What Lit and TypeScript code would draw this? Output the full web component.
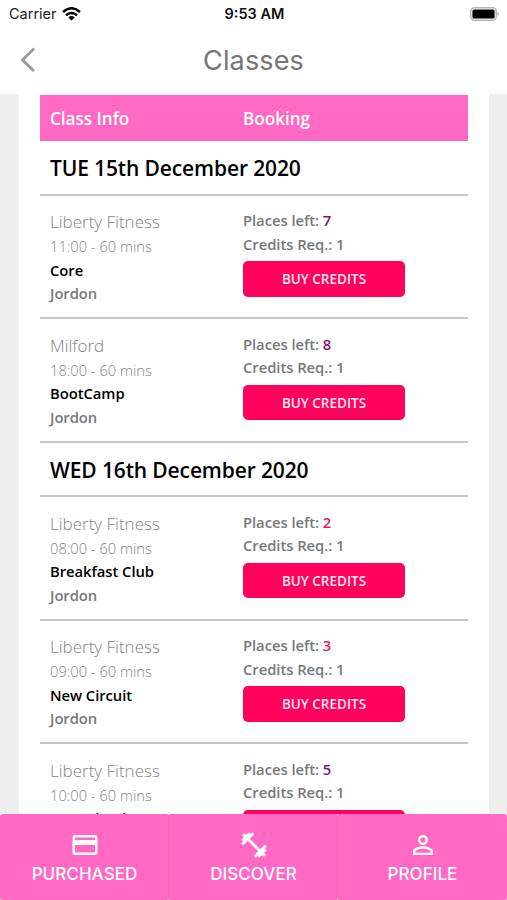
import { LitElement, html, css, svg } from "lit";
import { customElement } from "lit/decorators.js";

interface Slot { place: string; time: string; name: string; left: number; tone: string; }
interface Day { title: string; slots: Slot[]; }

const days: Day[] = [
  { title: "TUE 15th December 2020", slots: [
    { place: "Liberty Fitness", time: "11:00 - 60 mins", name: "Core", left: 7, tone: "plenty" },
    { place: "Milford", time: "18:00 - 60 mins", name: "BootCamp", left: 8, tone: "plenty" },
  ] },
  { title: "WED 16th December 2020", slots: [
    { place: "Liberty Fitness", time: "08:00 - 60 mins", name: "Breakfast Club", left: 2, tone: "few" },
    { place: "Liberty Fitness", time: "09:00 - 60 mins", name: "New Circuit", left: 3, tone: "few" },
    { place: "Liberty Fitness", time: "10:00 - 60 mins", name: "New Circuit", left: 5, tone: "plenty" },
  ] },
];

const card = svg`<path d="M20 4H4c-1.11 0-1.99.89-1.99 2L2 18c0 1.11.89 2 2 2h16c1.11 0 2-.89 2-2V6c0-1.11-.89-2-2-2zm0 14H4v-6h16v6zm0-10H4V6h16v2z"/>`;
const weights = svg`<path stroke="#fff" stroke-width=".4" d="M20.57 14.86L22 13.43 20.57 12 17 15.57 8.43 7 12 3.43 10.57 2 9.14 3.43 7.71 2 5.57 4.14 4.14 2.71 2.71 4.14l1.43 1.43L2 7.71l1.43 1.43L2 10.57 3.43 12 7 8.43 15.57 17 12 20.57 13.43 22l1.43-1.43L16.29 22l2.14-2.14 1.43 1.43 1.43-1.43-1.43-1.43L22 16.29z"/>`;
const person = svg`<path d="M12 5.9c1.16 0 2.1.94 2.1 2.1s-.94 2.1-2.1 2.1S9.9 9.16 9.9 8s.94-2.1 2.1-2.1m0 9c2.97 0 6.1 1.46 6.1 2.1v1.1H5.9V17c0-.64 3.13-2.1 6.1-2.1M12 4C9.79 4 8 5.79 8 8s1.79 4 4 4 4-1.79 4-4-1.79-4-4-4zm0 9c-2.67 0-8 1.34-8 4v3h16v-3c0-2.66-5.33-4-8-4z"/>`;

@customElement("app-root")
export class AppRoot extends LitElement {
  static styles = css`
    :host { display: flex; flex-direction: column; width: 507px; height: 900px; overflow: hidden; background: #fff; font-family: "Open Sans", sans-serif; }
    .status { display: grid; grid-template-columns: 1fr auto 1fr; align-items: center; height: 28px; padding: 0 7px 0 9px; box-sizing: border-box; font: 14.5px/28px Inter, sans-serif; color: #222; flex: none; }
    .carrier { display: flex; align-items: center; gap: 5px; }
    .clock { font-weight: 600; color: #111; }
    .battery { justify-self: end; display: block; }
    .top { position: relative; height: 66px; flex: none; display: flex; align-items: center; justify-content: center; }
    .back { position: absolute; left: 19px; top: 18px; }
    .heading { margin: 0; font: 400 27px/64px Inter, sans-serif; letter-spacing: .15px; color: #757575; }
    .body { flex: 1; min-height: 0; overflow: hidden; background: #eee; padding: 0 18px 0 19px; }
    .sheet { background: #fff; padding: 1px 21px 0; min-height: 100%; }
    .row { display: grid; grid-template-columns: 193px 1fr; padding: 0 10px; }
    .head { height: 46.4px; line-height: 47px; background: #ff69c3; color: #fff; font-size: 17.1px; font-weight: 600; }
    .date { margin: 0; height: 54.5px; box-sizing: border-box; border-bottom: 2px solid #c6c6c6; padding-left: 10px; font-size: 21px; letter-spacing: -.13px; font-weight: 600; line-height: 54px; color: #000; }
    .slot { height: 123.5px; box-sizing: border-box; border-bottom: 2px solid #c6c6c6; padding-top: 13.6px; font-size: 14.8px; letter-spacing: -.05px; line-height: 23.4px; font-weight: 600; color: #75797c; }
    .place { font-size: 17px; line-height: 25px; font-weight: 300; letter-spacing: 0; color: #7f8385; }
    .time { font-size: 14.7px; line-height: 24.3px; font-weight: 300; letter-spacing: 0; color: #7f8385; }
    .name { color: #000; }
    .plenty { color: #80157c; }
    .few { color: #e0205c; }
    .buy { display: block; width: 162px; height: 35.6px; margin-top: 5px; padding: 0; border: 0; border-radius: 5px; background: #ff005c; color: #ffe6ef; font: 600 13.5px/34px "Open Sans", sans-serif; }
    .tabs { flex: none; height: 86px; display: grid; grid-template-columns: repeat(3, 1fr); background: linear-gradient(#fff, #ffc3e7); }
    .tab { display: flex; flex-direction: column; align-items: center; padding-top: 16px; box-sizing: border-box; background: #ff69c3; color: #fff; border-radius: 3px; font: 500 17.1px/28px Inter, sans-serif; }
    .tab svg { display: block; width: 30px; height: 30px; fill: #fff; }
    .tab + .tab { box-shadow: -1px 0 0 #f862bb; }
  `;

  private slotRow(s: Slot) {
    return html`<div class="row slot">
      <div>
        <div class="place">${s.place}</div>
        <div class="time">${s.time}</div>
        <div class="name">${s.name}</div>
        <div>Jordon</div>
      </div>
      <div>
        <div>Places left: <span class=${s.tone}>${s.left}</span></div>
        <div>Credits Req.: 1</div>
        <button class="buy">BUY CREDITS</button>
      </div>
    </div>`;
  }

  render() {
    return html`
      <div class="status">
        <div class="carrier">Carrier
          <svg width="19" height="14" viewBox="0 0 19 14"><g fill="none" stroke="#000" stroke-width="2.5"><path d="M1 5Q9.5-2.5 18 5"/><path d="M4 8.3Q9.5 3.6 15 8.3"/></g><path d="M6.3 10.4Q9.5 7.8 12.7 10.4L9.5 13.6Z"/></svg>
        </div>
        <div class="clock">9:53 AM</div>
        <svg class="battery" width="30" height="14" viewBox="0 0 30 14"><rect x=".8" y=".8" width="25.4" height="12.4" rx="3.5" fill="#fff" stroke="#b4b4b4" stroke-width="1.4"/><rect x="2.4" y="2.4" width="22.2" height="9.2" rx="1.5"/><path d="M27.5 4.5Q30 7 27.5 9.5Z" fill="#aaa"/></svg>
      </div>
      <div class="top">
        <svg class="back" width="18" height="28" viewBox="0 0 18 28"><path d="M15 2.5L3.5 14L15 25" fill="none" stroke="#999" stroke-width="2.8"/></svg>
        <h1 class="heading">Classes</h1>
      </div>
      <div class="body"><div class="sheet">
        <div class="row head"><div>Class Info</div><div>Booking</div></div>
        ${days.map((d) => html`<h2 class="date">${d.title}</h2>${d.slots.map((s) => this.slotRow(s))}`)}
      </div></div>
      <div class="tabs">
        ${[["PURCHASED", card], ["DISCOVER", weights], ["PROFILE", person]].map(([label, icon]) => html`<div class="tab"><svg viewBox="0 0 24 24">${icon}</svg><span>${label}</span></div>`)}
      </div>`;
  }
}
